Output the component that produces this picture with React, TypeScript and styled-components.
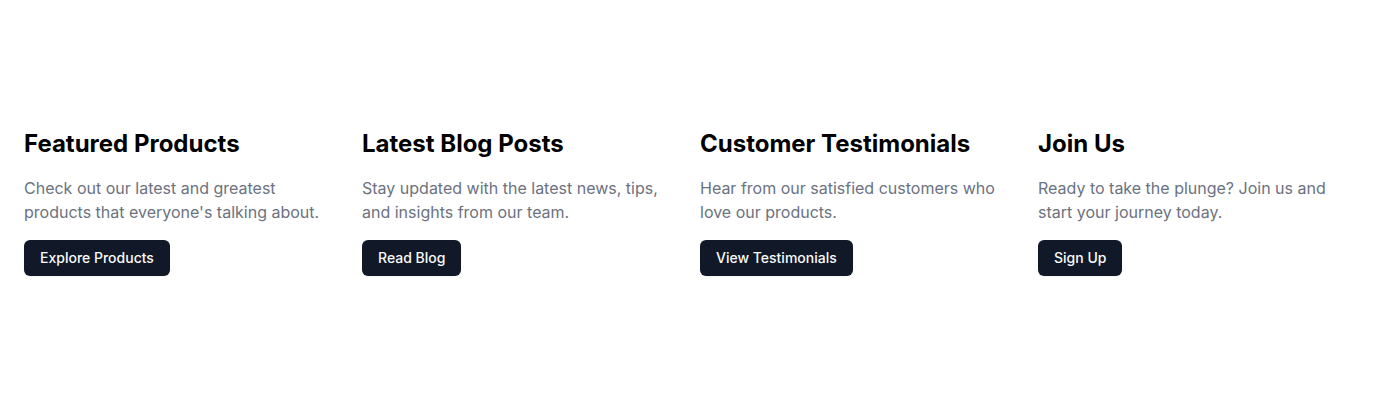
import React from "react";
import styled, { createGlobalStyle } from "styled-components";

const GlobalStyle = createGlobalStyle`
  *, *::before, *::after { box-sizing: border-box; }
  body {
    margin: 0;
    background: #ffffff;
    color: #000000;
    font-family: Inter, sans-serif;
    font-size: 16px;
    line-height: 24px;
  }
`;

const Section = styled.section`
  width: 100%;
  padding: 128px 24px;
`;

const Grid = styled.div`
  display: grid;
  grid-template-columns: repeat(4, minmax(0, 1fr));
  gap: 24px;

  @media (max-width: 1023px) {
    grid-template-columns: repeat(2, minmax(0, 1fr));
  }

  @media (max-width: 639px) {
    grid-template-columns: minmax(0, 1fr);
  }
`;

const Card = styled.article`
  display: flex;
  flex-direction: column;
  align-items: flex-start;
  gap: 16px;
`;

const Title = styled.h2`
  margin: 0;
  font-size: 24px;
  line-height: 32px;
  font-weight: 700;
`;

const Description = styled.p`
  margin: 0;
  color: #6b7280;
`;

const Button = styled.button`
  height: 36px;
  padding: 8px 16px;
  border: 0;
  border-radius: 6px;
  background: #111827;
  color: #f9fafb;
  font-family: inherit;
  font-size: 14px;
  line-height: 20px;
  font-weight: 500;
  white-space: nowrap;
  cursor: pointer;
  box-shadow: 0 1px 2px 0 rgba(0, 0, 0, 0.05);

  &:hover { background: #1f2937; }
`;

const features = [
  {
    title: "Featured Products",
    text: "Check out our latest and greatest products that everyone's talking about.",
    action: "Explore Products",
  },
  {
    title: "Latest Blog Posts",
    text: "Stay updated with the latest news, tips, and insights from our team.",
    action: "Read Blog",
  },
  {
    title: "Customer Testimonials",
    text: "Hear from our satisfied customers who love our products.",
    action: "View Testimonials",
  },
  {
    title: "Join Us",
    text: "Ready to take the plunge? Join us and start your journey today.",
    action: "Sign Up",
  },
];

export default function App() {
  return (
    <>
      <GlobalStyle />
      <Section>
        <Grid>
          {features.map((feature) => (
            <Card key={feature.title}>
              <Title>{feature.title}</Title>
              <Description>{feature.text}</Description>
              <Button type="button">{feature.action}</Button>
            </Card>
          ))}
        </Grid>
      </Section>
    </>
  );
}
